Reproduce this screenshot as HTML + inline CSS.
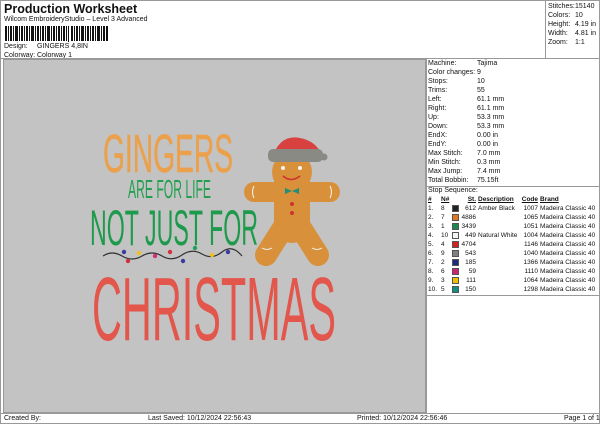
<!DOCTYPE html>
<html><head><meta charset="utf-8"><style>
*{margin:0;padding:0;box-sizing:border-box}
body{width:600px;height:424px;background:#fff;font-family:"Liberation Sans",sans-serif;color:#111;position:relative;overflow:hidden;font-size:7px}
.a{position:absolute;white-space:nowrap;line-height:9px}
</style></head><body>
<div class="a" style="left:0;top:0;width:600px;height:424px;border:1px solid #999"></div>
<div class="a" style="left:4px;top:2px;font-size:12.5px;font-weight:bold;line-height:15px">Production Worksheet</div>
<div class="a" style="left:4px;top:15px">Wilcom EmbroideryStudio – Level 3 Advanced</div>
<svg class="a" style="left:5px;top:26px" width="105" height="17">
<g fill="#111">
<rect x="0" y="0" width="2" height="15"/><rect x="3" y="0" width="1" height="15"/><rect x="5" y="0" width="2" height="15"/><rect x="8" y="0" width="1" height="15"/><rect x="10" y="0" width="3" height="15"/><rect x="14" y="0" width="1" height="15"/><rect x="16" y="0" width="2" height="15"/><rect x="19" y="0" width="1" height="15"/><rect x="21" y="0" width="2" height="15"/><rect x="24" y="0" width="1" height="15"/><rect x="26" y="0" width="3" height="15"/><rect x="30" y="0" width="1" height="15"/><rect x="32" y="0" width="2" height="15"/><rect x="35" y="0" width="1" height="15"/><rect x="37" y="0" width="2" height="15"/><rect x="40" y="0" width="1" height="15"/><rect x="42" y="0" width="3" height="15"/><rect x="46" y="0" width="1" height="15"/><rect x="48" y="0" width="2" height="15"/><rect x="51" y="0" width="1" height="15"/><rect x="53" y="0" width="2" height="15"/><rect x="56" y="0" width="1" height="15"/><rect x="58" y="0" width="2" height="15"/><rect x="61" y="0" width="1" height="15"/><rect x="63" y="0" width="1" height="16"/>
<rect x="66" y="0" width="2" height="15"/><rect x="69" y="0" width="1" height="15"/><rect x="71" y="0" width="2" height="15"/><rect x="74" y="0" width="1" height="15"/><rect x="76" y="0" width="3" height="15"/><rect x="80" y="0" width="1" height="15"/><rect x="82" y="0" width="2" height="15"/><rect x="85" y="0" width="1" height="15"/><rect x="87" y="0" width="2" height="15"/><rect x="90" y="0" width="1" height="15"/><rect x="92" y="0" width="3" height="15"/><rect x="96" y="0" width="1" height="15"/><rect x="98" y="0" width="2" height="15"/><rect x="101" y="0" width="2" height="15"/></g></svg>
<div class="a" style="left:4px;top:42px">Design:</div><div class="a" style="left:37px;top:42px">GINGERS 4,8IN</div>
<div class="a" style="left:4px;top:51px">Colorway:</div><div class="a" style="left:37px;top:51px">Colorway 1</div>
<div class="a" style="left:545px;top:0;width:1px;height:58px;background:#999"></div>
<div class="a" style="left:548px;top:2px">Stitches:</div><div class="a" style="left:575px;top:2px">15140</div>
<div class="a" style="left:548px;top:11px">Colors:</div><div class="a" style="left:575px;top:11px">10</div>
<div class="a" style="left:548px;top:20px">Height:</div><div class="a" style="left:575px;top:20px">4.19 in</div>
<div class="a" style="left:548px;top:29px">Width:</div><div class="a" style="left:575px;top:29px">4.81 in</div>
<div class="a" style="left:548px;top:38px">Zoom:</div><div class="a" style="left:575px;top:38px">1:1</div>
<div class="a" style="left:0;top:58px;width:600px;height:1px;background:#999"></div>
<div class="a" style="left:3px;top:59px;width:423px;height:354px;background:#c3c3c3;border:1px solid #999"></div>
<div class="a" style="left:426px;top:59px;width:1px;height:354px;background:#999"></div>
<div class="a" style="left:0;top:413px;width:600px;height:1px;background:#999"></div>
<div class="a" style="left:4px;top:414px">Created By:</div>
<div class="a" style="left:148px;top:414px">Last Saved: 10/12/2024 22:56:43</div>
<div class="a" style="left:357px;top:414px">Printed: 10/12/2024 22:56:46</div>
<div class="a" style="left:564px;top:414px">Page 1 of 1</div>

<div style="position:absolute;left:428px;top:59px">
<div class="a" style="top:0">Machine:</div><div class="a" style="left:49px;top:0">Tajima</div>
<div class="a" style="top:9px">Color changes:</div><div class="a" style="left:49px;top:9px">9</div>
<div class="a" style="top:18px">Stops:</div><div class="a" style="left:49px;top:18px">10</div>
<div class="a" style="top:27px">Trims:</div><div class="a" style="left:49px;top:27px">55</div>
<div class="a" style="top:36px">Left:</div><div class="a" style="left:49px;top:36px">61.1 mm</div>
<div class="a" style="top:45px">Right:</div><div class="a" style="left:49px;top:45px">61.1 mm</div>
<div class="a" style="top:54px">Up:</div><div class="a" style="left:49px;top:54px">53.3 mm</div>
<div class="a" style="top:63px">Down:</div><div class="a" style="left:49px;top:63px">53.3 mm</div>
<div class="a" style="top:72px">EndX:</div><div class="a" style="left:49px;top:72px">0.00 in</div>
<div class="a" style="top:81px">EndY:</div><div class="a" style="left:49px;top:81px">0.00 in</div>
<div class="a" style="top:90px">Max Stitch:</div><div class="a" style="left:49px;top:90px">7.0 mm</div>
<div class="a" style="top:99px">Min Stitch:</div><div class="a" style="left:49px;top:99px">0.3 mm</div>
<div class="a" style="top:108px">Max Jump:</div><div class="a" style="left:49px;top:108px">7.4 mm</div>
<div class="a" style="top:117px">Total Bobbin:</div><div class="a" style="left:49px;top:117px">75.15ft</div>
</div>
<div class="a" style="left:427px;top:186px;width:172px;height:1px;background:#999"></div>
<div class="a" style="left:428px;top:186px">Stop Sequence:</div>
<div class="a" style="left:427px;top:295px;width:172px;height:1px;background:#999"></div>
<div style="position:absolute;left:0;top:195px;font-size:6.5px">
<div class="a" style="left:428px;font-weight:bold;text-decoration:underline">#</div>
<div class="a" style="left:441px;font-weight:bold;text-decoration:underline">N#</div>
<div class="a" style="left:455px;width:21px;text-align:right;font-weight:bold;text-decoration:underline">St.</div>
<div class="a" style="left:478px;font-weight:bold;text-decoration:underline">Description</div>
<div class="a" style="left:520px;width:18px;text-align:right;font-weight:bold;text-decoration:underline">Code</div>
<div class="a" style="left:540px;font-weight:bold;text-decoration:underline">Brand</div>
</div>
<div id="rows"></div>
<script>
var d=[["1.","8","#222","612","Amber Black","1007"],["2.","7","#e07820","4886","","1065"],["3.","1","#1a8a50","3439","","1051"],["4.","10","#f4f4f4","449","Natural White","1004"],["5.","4","#d42020","4704","","1146"],["6.","9","#808080","543","","1040"],["7.","2","#1e2a80","185","","1366"],["8.","6","#d02070","59","","1110"],["9.","3","#f0c000","111","","1064"],["10.","5","#109080","150","","1298"]];
var h="";d.forEach(function(r,i){var t=204+i*9;
h+='<div class="a" style="font-size:6.5px;left:428px;top:'+t+'px">'+r[0]+'</div><div class="a" style="font-size:6.5px;left:441px;top:'+t+'px">'+r[1]+'</div><div class="a" style="left:452px;top:'+(t+1)+'px;width:7px;height:7px;background:'+r[2]+';border:1px solid #555"></div><div class="a" style="font-size:6.5px;left:455px;width:21px;text-align:right;top:'+t+'px">'+r[3]+'</div><div class="a" style="font-size:6.5px;left:478px;top:'+t+'px">'+r[4]+'</div><div class="a" style="font-size:6.5px;left:520px;width:18px;text-align:right;top:'+t+'px">'+r[5]+'</div><div class="a" style="font-size:6.5px;left:540px;top:'+t+'px">Madeira Classic 40</div>';});
document.getElementById('rows').innerHTML=h;
</script>

<svg class="a" style="left:0;top:0" width="600" height="424" font-family="Liberation Sans Narrow, Liberation Sans, sans-serif">
<text x="103" y="172" font-size="54" fill="#eba04c" textLength="130" lengthAdjust="spacingAndGlyphs" stroke="#eba04c" stroke-width="0.5">GINGERS</text>
<text x="128" y="198" font-size="26" fill="#22a050" textLength="83" lengthAdjust="spacingAndGlyphs">ARE FOR LIFE</text>
<text x="90" y="245" font-size="50" fill="#1e9a4c" textLength="168" lengthAdjust="spacingAndGlyphs">NOT JUST FOR</text>
<text x="92" y="340" font-size="90" fill="#e2564c" textLength="244" lengthAdjust="spacingAndGlyphs">CHRISTMAS</text>
<path d="M103 256 Q112 250 122 256 T142 256 T162 256 T182 255 T202 254 T222 252 T242 256" fill="none" stroke="#333" stroke-width="1.2"/>
<g><circle cx="124" cy="252" r="2.2" fill="#3a3aa0"/><circle cx="139" cy="253" r="2.2" fill="#f0c020"/><circle cx="128" cy="261" r="2.2" fill="#d03040"/><circle cx="155" cy="256" r="2.2" fill="#d0307a"/><circle cx="170" cy="252" r="2.2" fill="#d03040"/><circle cx="183" cy="261" r="2.2" fill="#3a3aa0"/><circle cx="195" cy="248" r="2.2" fill="#20a060"/><circle cx="212" cy="255" r="2.2" fill="#f0c020"/><circle cx="228" cy="252" r="2.2" fill="#3a3aa0"/></g>
<g stroke="#d8913a" stroke-linecap="round" fill="none">
<line x1="254" y1="192" x2="330" y2="192" stroke-width="20"/>
<line x1="292" y1="180" x2="292" y2="225" stroke-width="36"/>
<line x1="285" y1="225" x2="266" y2="255" stroke-width="22"/>
<line x1="299" y1="225" x2="318" y2="255" stroke-width="22"/>
</g>
<circle cx="292" cy="172" r="20" fill="#d8913a"/>
<path d="M272 158 Q280 134 300 138 Q316 141 322 155 L320 158 Z" fill="#d94040"/>
<rect x="268" y="149" width="55" height="13" rx="5" fill="#8a8a84"/>
<circle cx="324" cy="157" r="3.5" fill="#8a8a84"/>
<circle cx="283" cy="168" r="2" fill="#f4f4f4"/><circle cx="300" cy="168" r="2" fill="#f4f4f4"/>
<path d="M283 176 Q291 183 300 176" fill="none" stroke="#d03030" stroke-width="1.5"/>
<path d="M285 188 L292 191 L299 188 L299 194 L292 191 L285 194Z" fill="#20907a"/>
<circle cx="292" cy="204" r="2" fill="#d03030"/><circle cx="292" cy="213" r="2" fill="#d03030"/>
<path d="M254 186 q-3 6 0 12 M330 186 q3 6 0 12 M262 248 q5 3 10 0 M312 248 q5 3 10 0" fill="none" stroke="#f4f4f4" stroke-width="1"/>
</svg>
</body></html>
